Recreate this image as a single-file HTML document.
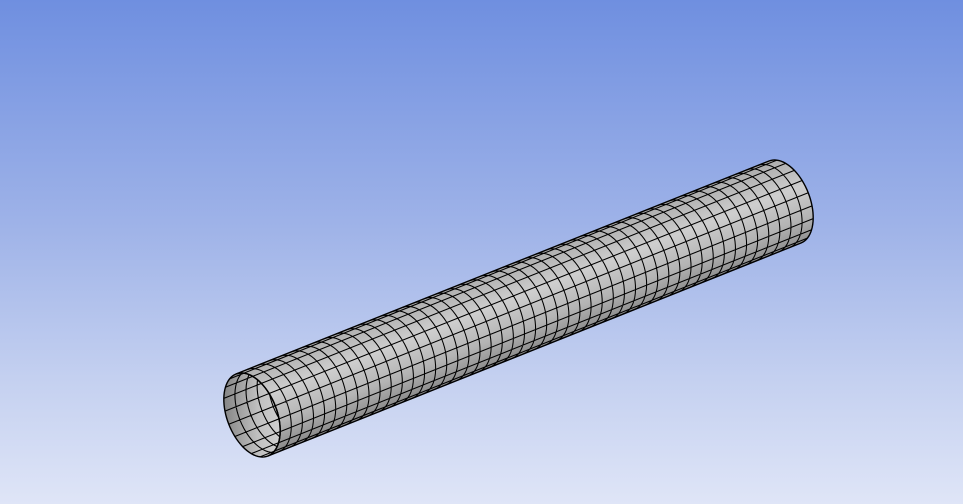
<!DOCTYPE html>
<html><head><meta charset="utf-8"><style>
html,body{margin:0;padding:0;width:963px;height:504px;overflow:hidden}
body{background:linear-gradient(to bottom,#6f8fe0 0%,#9fb3e8 45%,#c4d0f0 75%,#dfe5f7 100%)}
svg{position:absolute;left:0;top:0}
</style></head><body>
<svg id="s" width="963" height="504" viewBox="0 0 963 504" xmlns="http://www.w3.org/2000/svg">
<defs>
<linearGradient id="og" gradientUnits="userSpaceOnUse" x1="0" y1="0" x2="32" y2="80">
<stop offset="0" stop-color="#b0b0b0"/><stop offset="0.35" stop-color="#cecece"/><stop offset="0.7" stop-color="#b4b4b4"/><stop offset="1" stop-color="#888888"/>
</linearGradient>
<linearGradient id="ig" x1="0" y1="0" x2="1" y2="0">
<stop offset="0" stop-color="#858585"/><stop offset="0.6" stop-color="#c0c0c0"/><stop offset="1" stop-color="#d0d0d0"/>
</linearGradient>
</defs>
<g id="g"></g>
</svg>
<script>
(function(){
var C0=[252,415],C1=[785,202];
var U=[16,41];
var ax=[C1[0]-C0[0],C1[1]-C0[1]];var L=Math.hypot(ax[0],ax[1]);
var au=[ax[0]/L,ax[1]/L];var W=[au[0]*25,au[1]*25];
var NA=48,NC=20;
function P(t,th){return [C0[0]+ax[0]*t+Math.cos(th)*U[0]+Math.sin(th)*W[0],C0[1]+ax[1]*t+Math.cos(th)*U[1]+Math.sin(th)*W[1]];}
function f(p){return p[0].toFixed(2)+","+p[1].toFixed(2);}
var h="";
var d="M"+f(P(0,Math.PI))+" L"+f(P(1,Math.PI));
for(var i=1;i<=40;i++){d+=" L"+f(P(1,Math.PI-Math.PI*i/40));}
d+=" L"+f(P(0,0));
for(var i=1;i<=40;i++){d+=" L"+f(P(0,Math.PI*i/40));}
d+="Z";
h+='<path d="'+d+'" fill="url(#og)"/>';
var e="M"+f(P(0,0));for(var i=1;i<=80;i++){e+=" L"+f(P(0,2*Math.PI*i/80));}e+="Z";
h+='<clipPath id="ec"><path d="'+e+'"/></clipPath>';
h+='<path d="'+e+'" fill="url(#ig)"/>';
var lines="";
for(var k=1;k<NC/2;k++){var th=Math.PI+Math.PI*k/(NC/2);lines+="M"+f(P(0,th))+" L"+f(P(0.3,th))+" ";}
for(var s=1;s<=10;s++){var t=s/NA;var q="M"+f(P(t,Math.PI));for(var i=1;i<=30;i++){q+=" L"+f(P(t,Math.PI+Math.PI*i/30));}lines+=q+" ";}
h+='<path d="'+lines+'" fill="none" stroke="#000" stroke-width="1.1" clip-path="url(#ec)"/>';
var o="";
for(var k=1;k<NC/2;k++){var th=Math.PI*k/(NC/2);o+="M"+f(P(0,th))+" L"+f(P(1,th))+" ";}
for(var s=1;s<NA;s++){var t=s/NA;var q="M"+f(P(t,0));for(var i=1;i<=30;i++){q+=" L"+f(P(t,Math.PI*i/30));}o+=q+" ";}
h+='<path d="'+o+'" fill="none" stroke="#000" stroke-width="1.05"/>';
h+='<path d="'+d+'" fill="none" stroke="#000" stroke-width="1.4"/>';
h+='<path d="'+e+'" fill="none" stroke="#000" stroke-width="1.4"/>';
document.getElementById("g").innerHTML=h;
var og=document.getElementById("og");
og.setAttribute("x1",C0[0]-U[0]);og.setAttribute("y1",C0[1]-U[1]);og.setAttribute("x2",C0[0]+U[0]);og.setAttribute("y2",C0[1]+U[1]);
})();
</script>
</body></html>
